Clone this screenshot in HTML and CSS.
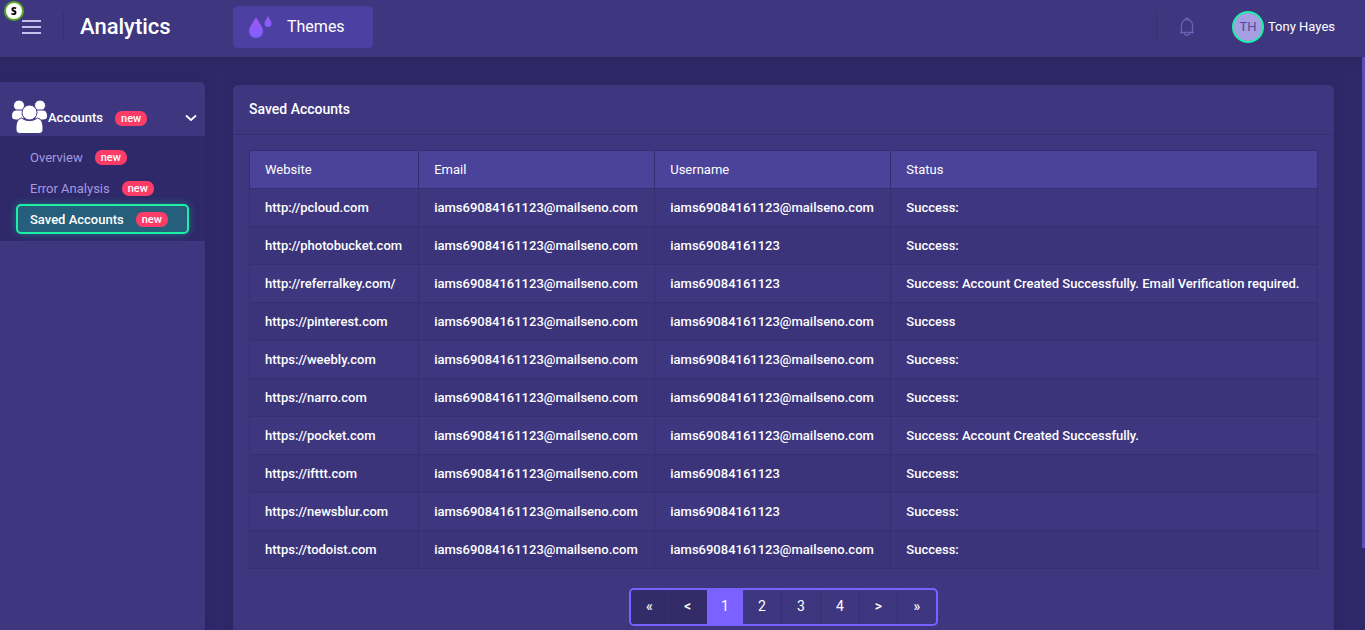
FILE: index.html
```html
<!DOCTYPE html>
<html lang="en">
<head>
  <meta charset="UTF-8" />
  <meta name="viewport" content="width=device-width, initial-scale=1.0" />
  <title>Analytics - Saved Accounts</title>
  <link rel="stylesheet" href="styles.css">
</head>
<body>
  <header class="topbar">
    <button class="menu-toggle" type="button" aria-label="Toggle menu"><span></span><span></span><span></span></button>
    <h1 class="brand">Analytics</h1>
    <button class="themes-btn" type="button">
      <svg width="24" height="24" viewBox="0 0 24 24" aria-hidden="true">
        <defs>
          <linearGradient id="drop" x1="0" y1="0" x2="0" y2="1">
            <stop offset="0" stop-color="#a255f5" />
            <stop offset="1" stop-color="#7b61ff" />
          </linearGradient>
        </defs>
        <path fill="url(#drop)" d="M8 2C6 7 1 11 1 16a7 7 0 0 0 14 0C15 11 10 7 8 2z" />
        <path fill="url(#drop)" d="M20 1c-1 3-3.500 5-3.500 7.500a3.500 3.500 0 0 0 7 0C23.500 6 21 4 20 1z" />
      </svg>
      Themes
    </button>
    <div class="topbar-right">
      <button class="bell" type="button" aria-label="Notifications">
        <svg width="16" height="20" viewBox="0 0 16 20" fill="none" stroke="currentColor" stroke-width="1.300" aria-hidden="true">
          <path d="M1 15.500h14M2.500 15.500V8a5.500 5.500 0 0 1 11 0v7.500M7 2.500V1.500h2v1M5 16c.5 3 5.500 3 6 0" />
        </svg>
      </button>
      <a class="user" href="#"><span class="avatar">TH</span>Tony Hayes</a>
    </div>
  </header>
  <span class="ext-badge">S</span>

  <div class="layout">
    <nav class="sidebar">
      <button class="nav-head" type="button">
        <svg class="people" width="36" height="36" viewBox="0 0 36 36" aria-hidden="true">
          <g fill="#fff" stroke="#3e3780">
            <circle cx="7" cy="5.500" r="5.500" />
            <circle cx="28" cy="5.500" r="5.500" />
            <path d="M4 10h8v10H4c-3 0-4.500-1-4.500-4S1 10 4 10zM31 10h-8v10h8c3 0 4.500-1 4.500-4S34 10 31 10z" />
            <circle cx="17.500" cy="12.500" r="7.500" />
            <path d="M9.500 18c5 3.500 11 3.500 16 0 4 1 5.500 5 5.500 10 0 4-1 5.500-5 5.500H9c-4 0-5-1.500-5-5.500 0-5 1.500-9 5.500-10z" />
          </g>
        </svg>
        <span>Accounts</span>
        <span class="badge">new</span>
        <svg class="chevron" width="12" height="8" viewBox="0 0 12 8" fill="none" stroke="#fff" stroke-width="1.800" aria-hidden="true">
          <path d="M1 1.500l5 4.500 5-4.500" />
        </svg>
      </button>
      <ul class="subnav">
        <li><a href="#">Overview <span class="badge">new</span></a></li>
        <li><a href="#">Error Analysis <span class="badge">new</span></a></li>
        <li><a class="active" href="#">Saved Accounts <span class="badge">new</span></a></li>
      </ul>
    </nav>

    <main class="content">
      <section class="card">
        <h2 class="card-title">Saved Accounts</h2>
        <div class="card-body">
          <table class="accounts">
            <thead>
              <tr><th>Website</th><th>Email</th><th>Username</th><th>Status</th></tr>
            </thead>
            <tbody>
              <tr><td>http://pcloud.com</td><td>iams69084161123@mailseno.com</td><td>iams69084161123@mailseno.com</td><td>Success:</td></tr>
              <tr><td>http://photobucket.com</td><td>iams69084161123@mailseno.com</td><td>iams69084161123</td><td>Success:</td></tr>
              <tr><td>http://referralkey.com/</td><td>iams69084161123@mailseno.com</td><td>iams69084161123</td><td>Success: Account Created Successfully. Email Verification required.</td></tr>
              <tr><td>https://pinterest.com</td><td>iams69084161123@mailseno.com</td><td>iams69084161123@mailseno.com</td><td>Success</td></tr>
              <tr><td>https://weebly.com</td><td>iams69084161123@mailseno.com</td><td>iams69084161123@mailseno.com</td><td>Success:</td></tr>
              <tr><td>https://narro.com</td><td>iams69084161123@mailseno.com</td><td>iams69084161123@mailseno.com</td><td>Success:</td></tr>
              <tr><td>https://pocket.com</td><td>iams69084161123@mailseno.com</td><td>iams69084161123@mailseno.com</td><td>Success: Account Created Successfully.</td></tr>
              <tr><td>https://ifttt.com</td><td>iams69084161123@mailseno.com</td><td>iams69084161123</td><td>Success:</td></tr>
              <tr><td>https://newsblur.com</td><td>iams69084161123@mailseno.com</td><td>iams69084161123</td><td>Success:</td></tr>
              <tr><td>https://todoist.com</td><td>iams69084161123@mailseno.com</td><td>iams69084161123@mailseno.com</td><td>Success:</td></tr>
            </tbody>
          </table>
          <nav class="pagination" aria-label="Pages">
            <button type="button" class="step" disabled>«</button>
            <button type="button" class="step" disabled>&lt;</button>
            <button type="button" class="current">1</button>
            <button type="button">2</button>
            <button type="button">3</button>
            <button type="button">4</button>
            <button type="button" class="step">&gt;</button>
            <button type="button" class="step">»</button>
          </nav>
        </div>
      </section>
    </main>
  </div>
  <div class="scroll-thumb"></div>
</body>
</html>
```
FILE: styles.css
```css
/* Theme */
:root {
  --bg: #2f2869;
  --panel: #3e3780;
  --line: #352e72;
  --head: #4b4299;
  --accent: #7b61ff;
  --green: #1bf0a5;
  --pink: #fd3c68;
  --muted: #a39ae0;
}
* {
  box-sizing: border-box;
}
body {
  margin: 0;
  height: 100vh;
  display: flex;
  flex-direction: column;
  overflow: hidden;
  background: var(--bg);
  color: #fff;
  font: 400 13px/20px Roboto, sans-serif;
}
button {
  border: 0;
  padding: 0;
  background: none;
  color: inherit;
  font: inherit;
  cursor: pointer;
}
a {
  color: inherit;
  text-decoration: none;
}
/* Top bar */
.topbar {
  flex: none;
  display: flex;
  align-items: center;
  height: 57px;
  padding: 0 30px 3px 0;
  background: var(--panel);
  box-shadow: 0 2px 12px rgba(38,38,80,0.6);
  position: relative;
}
.menu-toggle {
  display: flex;
  flex-direction: column;
  justify-content: center;
  gap: 4px;
  width: 64px;
  height: 28px;
  padding-left: 22px;
  border-right: 1px solid var(--line);
}
.menu-toggle span {
  width: 19px;
  height: 2px;
  background: #c5c0ee;
}
.brand {
  width: 153px;
  margin: 0 0 0 16px;
  font-size: 22px;
  font-weight: 500;
}
.themes-btn {
  display: flex;
  align-items: center;
  gap: 15px;
  width: 140px;
  height: 42px;
  padding-left: 15px;
  border-radius: 5px;
  background: #4c40a2;
  font-size: 16px;
}
.topbar-right {
  display: flex;
  align-items: center;
  margin-left: auto;
}
.bell {
  display: flex;
  height: 28px;
  align-items: center;
  padding: 0 37px 0 22px;
  border-left: 1px solid var(--line);
  color: #6c62b5;
}
.user {
  display: flex;
  align-items: center;
  gap: 4px;
}
.avatar {
  display: flex;
  align-items: center;
  justify-content: center;
  width: 32px;
  height: 32px;
  border: 2px solid var(--green);
  border-radius: 50%;
  background: #a59ee2;
  color: #51479b;
}
.ext-badge {
  position: fixed;
  top: 1px;
  left: 4px;
  width: 20px;
  height: 20px;
  border: 2px solid #58a928;
  border-radius: 50%;
  background: #fff;
  color: #000;
  font: 800 10px/16px "Open Sans", sans-serif;
  text-align: center;
}
/* Sidebar */
.layout {
  flex: 1;
  display: flex;
  align-items: stretch;
  gap: 28px;
  min-height: 0;
  padding: 25px 31px 0 0;
}
.sidebar {
  flex: none;
  width: 205px;
  border-radius: 0 5px 0 0;
  background: var(--panel);
  box-shadow: 0 0 12px rgba(38,38,80,0.4);
}
.nav-head {
  display: flex;
  align-items: center;
  width: 100%;
  height: 54px;
  padding: 18px 8px 0 12px;
  font-weight: 500;
}
.badge {
  margin-left: 12px;
  padding: 0 6px;
  border-radius: 7px;
  background: var(--pink);
  color: #fff;
  font-size: 11px;
  font-weight: 500;
  line-height: 15px;
}
.chevron {
  margin-left: auto;
}
.subnav {
  margin: 0;
  padding: 6px 16px;
  background: var(--bg);
  list-style: none;
}
.subnav a {
  display: flex;
  align-items: center;
  height: 30px;
  margin-bottom: 1px;
  padding: 1px 12px 0;
  border: 2px solid transparent;
  border-radius: 5px;
  color: var(--muted);
}
.subnav a.active {
  border-color: var(--green);
  background: #265f7b;
  box-shadow: 0 0 8px rgba(29,233,164,0.35);
  color: #fff;
  font-weight: 500;
}
/* Saved accounts card */
.content {
  flex: 1;
  min-width: 0;
  padding-top: 3px;
}
.card {
  min-height: 100%;
  border-radius: 5px;
  background: var(--panel);
  box-shadow: 0 0 12px rgba(38,38,80,0.4);
}
.card-title {
  height: 50px;
  margin: 0;
  padding: 0 16px;
  border-bottom: 1px solid var(--line);
  font-size: 14px;
  font-weight: 500;
  line-height: 48px;
}
.card-body {
  padding: 15px 16px 32px;
}
.accounts {
  width: 100%;
  border-collapse: collapse;
}
.accounts th,
.accounts td {
  height: 38px;
  padding: 0 15px;
  border: 1px solid var(--line);
  text-align: left;
  font-weight: 500;
}
.accounts th {
  background: var(--head);
  font-weight: 400;
}
.accounts tbody tr:nth-child(even) {
  background: #3b347a;
}
/* Pagination */
.pagination {
  display: flex;
  width: max-content;
  margin: 19px auto 0;
  border: 2px solid var(--accent);
  border-radius: 5px;
  overflow: hidden;
}
.pagination button {
  width: 39px;
  height: 34px;
  padding-bottom: 2px;
  border-right: 1px solid var(--line);
  font-size: 14px;
}
.pagination .step {
  width: 38px;
  font-weight: 500;
}
.pagination button:last-child {
  border-right: 0;
}
.pagination button:disabled {
  background: #332c68;
  color: #fff;
}
.pagination .current {
  width: 36px;
  border: 0;
  background: var(--accent);
}
.scroll-thumb {
  position: fixed;
  top: 57px;
  right: 0;
  width: 3px;
  height: 78vh;
  background: #5a4db8;
}
```
